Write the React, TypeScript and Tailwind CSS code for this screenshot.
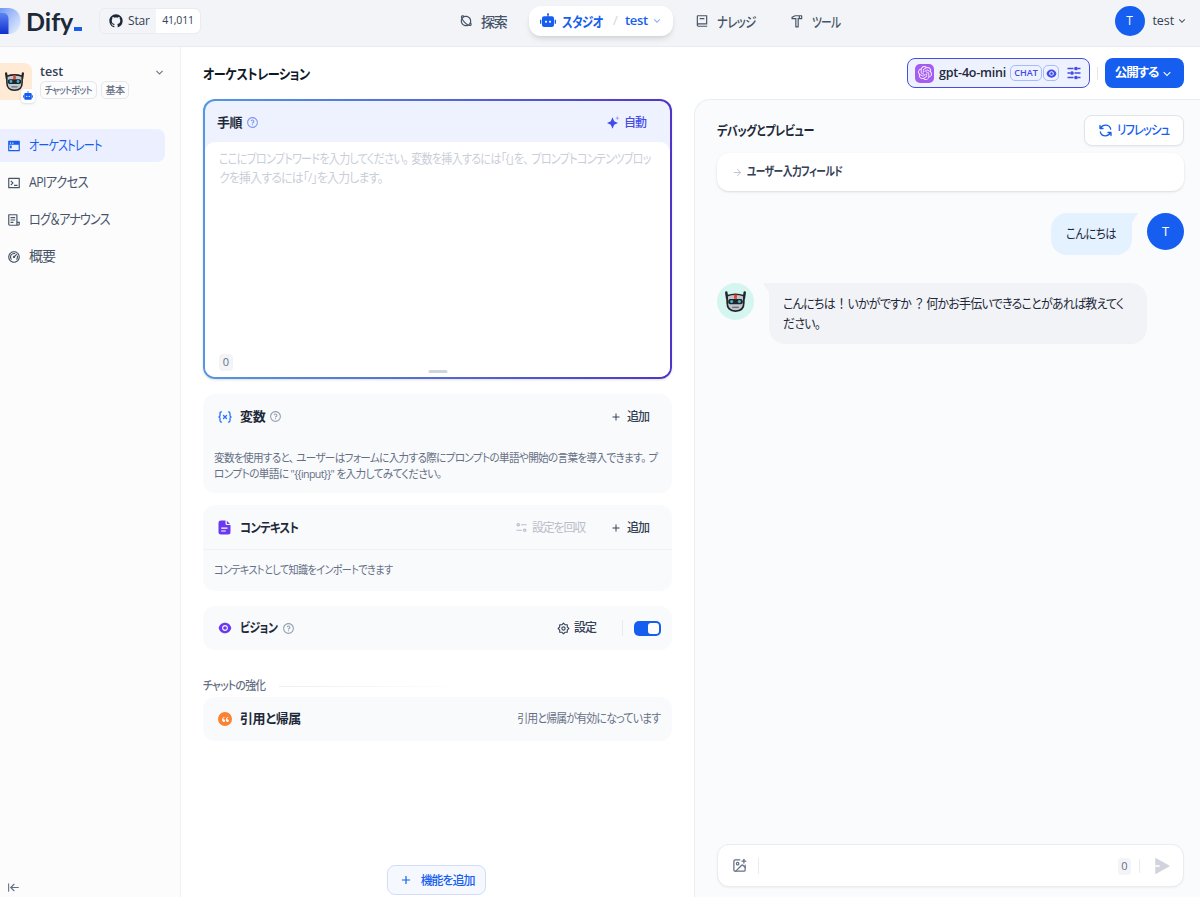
import React from 'react';
import { ArrowLeftToLine, ImagePlus } from 'lucide-react';
import { SiOpenai } from 'react-icons/si';
import {
  RiAddLine,
  RiArrowDownSLine,
  RiArrowRightLine,
  RiBook2Line,
  RiDashboard2Line,
  RiDoubleQuotesL,
  RiEyeFill,
  RiFileList3Line,
  RiGithubFill,
  RiHammerLine,
  RiPlanetLine,
  RiQuestionLine,
  RiRobot2Fill,
  RiSendPlane2Fill,
  RiSettings2Line,
  RiTerminalBoxLine,
  RiTerminalWindowFill,
} from 'react-icons/ri';

const RobotFace: React.FC<{ className?: string }> = ({ className }) => (
  <svg viewBox="0 0 22 22" className={className}>
    <path d="M2.200 2.500 3 8M19.800 2.500 19 8" stroke="#20242b" strokeWidth="2.400" strokeLinecap="round" />
    <path d="M3 5.500Q11 2.600 19 5.500V12q0 8.200-8 8.200T3 12Z" fill="#c3c7cc" stroke="#20242b" strokeWidth="1.600" />
    <path d="M9.600 4.400h2.800v4H9.600z" fill="#e2452f" />
    <rect x="4" y="8.600" width="14" height="5" rx="2" fill="#20242b" />
    <circle cx="7.300" cy="11" r="1.500" fill="#3fb7c9" />
    <circle cx="14.700" cy="11" r="1.500" fill="#3fb7c9" />
    <path d="M7.800 16.600h6.400" stroke="#6b7280" strokeWidth="1.400" />
  </svg>
);

const LogoMark = () => (
  <svg width="21" height="27" viewBox="0 0 21 27">
    <defs>
      <linearGradient id="logo-light" x1="0" y1="0" x2="1" y2="1">
        <stop offset="0" stopColor="#6f98f5" />
        <stop offset="1" stopColor="#eef4ff" />
      </linearGradient>
      <linearGradient id="logo-dark" x1="0" y1="0" x2="0" y2="1">
        <stop offset="0" stopColor="#5d83f2" />
        <stop offset="1" stopColor="#0f2fce" />
      </linearGradient>
    </defs>
    <path d="M0 0h8c8 0 12.500 5.500 12.500 13S16 26 9 26H0Z" fill="url(#logo-light)" />
    <path d="M0 5h4q4.500 1 4.500 6v15H0Z" fill="url(#logo-dark)" />
  </svg>
);

const VariableIcon = () => (
  <svg width="14" height="14" viewBox="0 0 14 14" fill="none" stroke="#2970ff" strokeWidth="1.300" strokeLinecap="round">
    <path d="M3.500 1.800C2.300 1.800 2 2.400 2 3.500v2q0 1.100-1 1.500 1 .4 1 1.500v2c0 1.100.3 1.700 1.500 1.700M10.500 1.800c1.200 0 1.500.6 1.500 1.700v2q0 1.100 1 1.500-1 .4-1 1.500v2c0 1.100-.3 1.700-1.500 1.700M5.500 5.500l3 3M8.500 5.500l-3 3" />
  </svg>
);

const ContextIcon = () => (
  <svg width="13" height="15" viewBox="0 0 13 15">
    <path d="M3 .5h4.500v3q0 1.500 1.500 1.500h3.500v7q0 2.500-2.500 2.500H3Q.5 14.500.5 12V3Q.5.5 3 .5Z" fill="#6938ef" />
    <path d="M8.800.8 12 4H9.500q-.7 0-.7-.7Z" fill="#6938ef" />
    <path d="M3.200 8.200h6.300M3.200 11h4.600" stroke="#fff" strokeWidth="1.200" />
  </svg>
);

const SlidersIcon = () => (
  <svg width="14" height="14" viewBox="0 0 14 14" stroke="#444ce7" strokeWidth="1.300" fill="#444ce7">
    <path d="M.5 2.500h6M11 2.500h2.500M.5 7h2.500M7.500 7h6M.5 11.500h6M11 11.500h2.500" />
    <circle cx="9" cy="2.500" r="1.200" />
    <circle cx="5" cy="7" r="1.200" />
    <circle cx="9" cy="11.500" r="1.200" />
  </svg>
);

const SparkleIcon = () => (
  <svg width="13" height="13" viewBox="0 0 13 13" fill="#444ce7">
    <path d="M5.500 1.300 7.200 5.300 11 7 7.200 8.700 5.500 12.700 3.800 8.700 0 7l3.800-1.700Z" />
    <path d="m10.300 0 .6 1.600 1.600.6-1.600.6-.6 1.600-.6-1.600-1.600-.6 1.600-.6Z" opacity=".5" />
  </svg>
);

const RecallIcon = () => (
  <svg width="11" height="11" viewBox="0 0 12 12" fill="none" stroke="#b9bec8" strokeWidth="1.300">
    <circle cx="2.500" cy="3" r="1.300" />
    <path d="M5.500 3h6M.5 9h6" />
    <circle cx="9.500" cy="9" r="1.300" />
  </svg>
);

const RefreshIcon = () => (
  <svg width="13" height="13" viewBox="0 0 13 13" fill="none" stroke="#155eef" strokeWidth="1.300" strokeLinecap="round" strokeLinejoin="round">
    <path d="M1 1.500v3h3M1.300 4.300C2.500 2.300 4.300 1.200 6.500 1.200c2.600 0 4.700 1.700 5.200 4M12 11.500v-3H9M11.700 8.700c-1.200 2-3 3.100-5.200 3.100-2.600 0-4.700-1.700-5.200-4" />
  </svg>
);

const navItems = [
  { icon: RiTerminalWindowFill, label: 'オーケストレート', fit: 'tracking-[-1px] scale-x-[0.79]', active: true },
  { icon: RiTerminalBoxLine, label: 'APIアクセス', fit: 'tracking-[-0.7px] scale-x-[0.88]', active: false },
  { icon: RiFileList3Line, label: 'ログ＆アナウンス', fit: 'tracking-[-1px] scale-x-[0.865]', active: false },
  { icon: RiDashboard2Line, label: '概要', fit: 'tracking-[-1px]', active: false },
];

const Header = () => (
  <header className="flex h-[47px] shrink-0 items-center border-b border-[#e9ebf0] bg-[#f2f4f7] pb-[4px]">
    <div className="flex w-[99px] items-center">
      <LogoMark />
      <div className="ml-[5px] flex items-end">
        <span className="w-[48px] font-['Lato'] text-[25px] leading-[28px] font-bold text-[#1d2939]">Dify</span>
        <span className="mb-[4px] h-[4px] w-[8px] bg-[#155eef]"></span>
      </div>
    </div>
    <div className="flex h-[26px] w-[102px] items-center rounded-md border border-[#eaecf0] text-[12px] font-medium text-[#344054]">
      <div className="flex w-[56px] items-center gap-1 pl-2">
        <RiGithubFill size={16} className="text-[#1d2939]" />
        <span className="tracking-[-0.2px]">Star</span>
      </div>
      <div className="flex h-full flex-1 items-center justify-center rounded-r-md bg-white text-[10.500px] tracking-[-0.2px]">41,011</div>
    </div>

    <nav className="ml-[258px] flex items-center text-[14px] font-medium text-[#475467]">
      <div className="flex w-[70px] items-center gap-[8px]">
        <RiPlanetLine size={14} />
        <span className="tracking-[-1.200px]">探索</span>
      </div>
      <div className="flex h-[30px] w-[144px] items-center rounded-xl bg-white pl-[11px] text-[#155eef] shadow-md">
        <RiRobot2Fill size={16} />
        <span className="ml-[6px] w-[51px] origin-left scale-x-[0.81] font-semibold whitespace-nowrap tracking-[-0.6px]">スタジオ</span>
        <span className="w-[12px] text-[13px] font-normal text-[#d0d5dd]">/</span>
        <span className="text-[13px] font-semibold tracking-[-0.3px]">test</span>
        <RiArrowDownSLine size={12} className="ml-[3px] text-[#84adff]" />
      </div>
      <div className="ml-[22px] flex w-[95px] items-center gap-[8px]">
        <RiBook2Line size={14} />
        <span className="origin-left scale-x-[0.81] tracking-[-0.6px]">ナレッジ</span>
      </div>
      <div className="flex items-center gap-[8px]">
        <RiHammerLine size={14} />
        <span className="w-[32px] origin-left scale-x-[0.77] whitespace-nowrap tracking-[-1px]">ツール</span>
      </div>
    </nav>

    <div className="mr-[12px] ml-auto flex items-center">
      <div className="flex size-[30px] items-center justify-center rounded-full bg-[#155eef] text-[12px] text-white">T</div>
      <span className="ml-[8px] text-[12.500px] tracking-[-0.1px] text-[#344054]">test</span>
      <RiArrowDownSLine size={12} className="ml-[2px] text-[#475467]" />
    </div>
  </header>
);

const Sidebar = () => (
  <aside className="flex w-[181px] shrink-0 flex-col border-r border-[#f0f1f4] bg-[#fcfcfd]">
    <div className="flex h-[82px] pt-[16px]">
      <div className="relative flex h-[37px] w-[32px] items-center rounded-r-lg bg-[#ffead5]">
        <RobotFace className="ml-[4px] size-[21px]" />
        <div className="absolute -right-[3px] -bottom-[3px] flex size-[14px] items-center justify-center rounded bg-white text-[#155eef] shadow-sm">
          <RiRobot2Fill size={10} />
        </div>
      </div>
      <div className="ml-[8px] flex-1">
        <div className="flex h-[18px] items-center justify-between pr-[14px]">
          <span className="text-[12.500px] font-semibold text-[#344054]">test</span>
          <RiArrowDownSLine size={13} className="text-[#667085]" />
        </div>
        <div className="flex gap-[4px] text-[10px] font-medium text-[#667085]">
          <span className="flex h-[18px] w-[57px] items-center justify-center rounded-[5px] border border-[#e4e7ec]">
            <span className="scale-x-[0.9] whitespace-nowrap tracking-[-0.8px]">チャットボット</span>
          </span>
          <span className="flex h-[18px] w-[28px] items-center justify-center rounded-[5px] border border-[#e4e7ec] tracking-[-0.5px]">基本</span>
        </div>
      </div>
    </div>
    <nav className="flex flex-col gap-[4px] text-[14px] text-[#475467]">
      {navItems.map(({ icon: Icon, label, fit, active }) => (
        <div
          key={label}
          className={`flex h-[33px] w-[165px] items-center gap-[8px] rounded-r-lg pl-[7px] ${active ? 'bg-[#ebefff] text-[#155eef]' : ''}`}
        >
          <Icon size={14} />
          <span className={`origin-left pb-[2px] whitespace-nowrap ${fit}`}>{label}</span>
        </div>
      ))}
    </nav>
    <ArrowLeftToLine size={13} strokeWidth={2} className="mt-auto mb-[3px] ml-[7px] text-[#667085]" />
  </aside>
);

const AddButton = () => (
  <div className="flex items-center gap-[5px] text-[12px] font-medium text-[#344054]">
    <RiAddLine size={12} />
    <span className="tracking-[-1px]">追加</span>
  </div>
);

const Config = () => (
  <section className="flex w-[513px] shrink-0 flex-col pl-[22px]">
    <div className="w-[469px]">
      <div className="h-[280px] rounded-xl bg-linear-to-r from-[#5497e2] to-[#4f34c8] p-[2px] shadow-sm">
        <div className="flex h-full flex-col rounded-[10px] bg-[#eef2ff]">
          <div className="flex h-[41px] items-center pt-[2px] pr-[24px] pl-[12px]">
            <span className="text-[13px] font-semibold tracking-[-0.6px] text-[#1d2939]">手順</span>
            <RiQuestionLine size={13} className="ml-[4px] text-[#8098f9]" />
            <div className="ml-auto flex items-center gap-[4px] text-[12px] font-medium text-[#444ce7]">
              <SparkleIcon />
              <span className="tracking-[-1px]">自動</span>
            </div>
          </div>
          <div className="relative flex flex-1 flex-col rounded-[10px] bg-white px-[14px] pt-[7px]">
            <div className="text-[13px] leading-[19px] whitespace-nowrap text-[#c9ced8]">
              <div className="w-[430px] origin-left scale-x-[0.846] tracking-[-0.8px]">
                ここにプロンプトワードを入力してください。<span className="ml-[4px]">変数を挿入するには「{'{'}」を、</span><span className="ml-[4px]">プロンプトコンテンツブロッ</span>
              </div>
              <div className="w-[430px] origin-left scale-x-[0.91] tracking-[-0.8px]">クを挿入するには「/」を入力します。</div>
            </div>
            <div className="mt-auto mb-[6px] flex h-[17px] w-[14px] items-center justify-center rounded bg-[#f2f4f7] text-[11px] text-[#667085]">0</div>
            <div className="absolute bottom-[4px] left-1/2 h-[3px] w-[19px] -translate-x-1/2 rounded-full bg-[#d0d5dd]"></div>
          </div>
        </div>
      </div>

      <div className="mt-[15px] h-[99px] rounded-xl bg-[#f9fafc]">
        <div className="flex h-[44px] items-center pt-[1px] pr-[23px] pl-[15px]">
          <VariableIcon />
          <span className="ml-[8px] text-[13px] font-semibold tracking-[-0.3px] text-[#1d2939]">変数</span>
          <RiQuestionLine size={13} className="mr-auto ml-[4px] text-[#98a2b3]" />
          <AddButton />
        </div>
        <div className="mt-[12px] pl-[11px] text-[11.500px] leading-[15.500px] whitespace-nowrap text-[#667085]">
          <div className="w-[440px] origin-left scale-x-[0.919] tracking-[-0.7px]">
            変数を使用すると、<span className="ml-[3px]">ユーザーはフォームに入力する際にプロンプトの単語や開始の言葉を導入できます。</span><span className="ml-[3px]">プ</span>
          </div>
          <div className="w-[440px] origin-left scale-x-[0.93] tracking-[-0.7px]">ロンプトの単語に "{'{{input}}'}" を入力してみてください。</div>
        </div>
      </div>

      <div className="mt-[12px] h-[86px] rounded-xl bg-[#f9fafc]">
        <div className="flex h-[45px] items-center border-b border-[#f0f2f5] pt-[1px] pr-[23px] pl-[15px]">
          <ContextIcon />
          <span className="ml-[9px] origin-left scale-x-[0.87] text-[13px] font-semibold tracking-[-0.7px] text-[#1d2939]">コンテキスト</span>
          <div className="mr-[25px] ml-auto flex items-center gap-[5px] text-[12px] text-[#b9bec8]">
            <RecallIcon />
            <span className="tracking-[-1.200px]">設定を回収</span>
          </div>
          <AddButton />
        </div>
        <div className="w-[440px] origin-left pt-[12px] pl-[11px] text-[11.500px] leading-[16px] whitespace-nowrap text-[#667085]">
          <div className="origin-left scale-x-[0.877] tracking-[-0.7px]">コンテキストとして知識をインポートできます</div>
        </div>
      </div>

      <div className="mt-[15px] flex h-[44px] items-center rounded-xl bg-[#f9fafc] pr-[11px] pl-[15px]">
        <RiEyeFill size={14} className="text-[#6938ef]" />
        <span className="ml-[8px] w-[39px] origin-left scale-x-[0.84] text-[13px] font-semibold whitespace-nowrap tracking-[-0.6px] text-[#1d2939]">ビジョン</span>
        <RiQuestionLine size={13} className="ml-[3px] text-[#98a2b3]" />
        <div className="ml-auto flex items-center gap-[4px] text-[12px] font-medium text-[#344054]">
          <RiSettings2Line size={13} />
          <span className="tracking-[-1px]">設定</span>
        </div>
        <div className="mr-[11px] ml-[26px] h-[16px] w-px bg-[#eaecf0]"></div>
        <div className="flex h-[15px] w-[27px] justify-end rounded-[5px] bg-[#155eef] p-[2px]">
          <div className="w-[11px] rounded-[3px] bg-white"></div>
        </div>
      </div>

      <div className="mt-[28px] flex h-[16px] items-center">
        <span className="w-[76px] origin-left scale-x-[0.9] text-[12px] font-medium whitespace-nowrap tracking-[-0.8px] text-[#667085]">チャットの強化</span>
        <div className="h-px w-[190px] bg-linear-to-r from-[#eceef2] to-white"></div>
      </div>
      <div className="mt-[3px] flex h-[44px] items-center rounded-xl bg-[#f9fafc] pr-[12px] pl-[15px]">
        <div className="flex size-[14px] items-center justify-center rounded-full bg-[#fb8232]">
          <RiDoubleQuotesL size={9} className="text-white" />
        </div>
        <span className="ml-[8px] text-[13px] font-semibold tracking-[-0.4px] text-[#1d2939]">引用と帰属</span>
        <span className="ml-auto origin-right scale-x-[0.91] text-[12px] tracking-[-0.9px] text-[#667085]">引用と帰属が有効になっています</span>
      </div>
    </div>
    <div className="mt-auto mb-[2px] ml-[184px] flex h-[30px] w-[99px] items-center justify-center gap-[8px] rounded-lg border border-[#d1dcfb] bg-[#f5f8ff] text-[12px] font-medium text-[#155eef]">
      <RiAddLine size={14} />
      <span className="pt-[1px] tracking-[-1.100px]">機能を追加</span>
    </div>
  </section>
);

const Preview = () => (
  <section className="flex flex-1 flex-col rounded-tl-2xl border-t border-l border-[#eaedf1] bg-[#f9fbfc] pr-[16px] pl-[22px]">
    <div className="flex h-[53px] items-center justify-between pt-[7px]">
      <span className="origin-left scale-x-[0.85] pt-[2px] text-[13px] font-semibold tracking-[-0.5px] text-[#1d2939]">デバッグとプレビュー</span>
      <div className="flex h-[31px] w-[100px] items-center rounded-lg border border-[#e1e4ea] bg-white pl-[14px] text-[13px] font-medium text-[#155eef] shadow-xs">
        <RefreshIcon />
        <span className="ml-[5px] w-[54px] origin-left scale-x-[0.87] whitespace-nowrap tracking-[-1px]">リフレッシュ</span>
      </div>
    </div>
    <div className="flex h-[38px] items-center rounded-xl bg-white pl-[15px] shadow">
      <RiArrowRightLine size={11} className="text-[#c3c8d2]" />
      <span className="ml-[4px] origin-left scale-x-[0.81] text-[12px] font-semibold tracking-[-0.6px] text-[#344054]">ユーザー入力フィールド</span>
    </div>

    <div className="mt-[22px] flex h-[42px] justify-end">
      <div className="relative mr-[15px] flex w-[81px] items-center rounded-2xl rounded-tr-none bg-[#e4f1ff] pl-[15px] text-[13px] text-[#1d2939]">
        <span className="origin-left scale-x-[0.87] whitespace-nowrap tracking-[-0.6px]">こんにちは</span>
        <svg width="7" height="12" viewBox="0 0 7 12" className="absolute top-0 -right-[6px] text-[#e4f1ff]">
          <path d="M0 0h6q1 0 .5 1L0 11Z" fill="currentColor" />
        </svg>
      </div>
      <div className="flex size-[37px] items-center justify-center rounded-full bg-[#155eef] text-[13px] text-white">T</div>
    </div>

    <div className="mt-[28px] flex">
      <div className="flex size-[37px] items-center justify-center rounded-full bg-[#d5f5f1]">
        <RobotFace className="size-[23px]" />
      </div>
      <div className="relative ml-[15px] h-[61px] w-[378px] rounded-2xl rounded-tl-none bg-[#f2f3f6] pt-[10px] pl-[14px] text-[13px] leading-[20px] whitespace-nowrap text-[#1d2939]">
        <svg width="7" height="12" viewBox="0 0 7 12" className="absolute top-0 -left-[6px] text-[#f2f3f6]">
          <path d="M7 0H1Q0 0 .5 1L7 11Z" fill="currentColor" />
        </svg>
        <div className="w-[350px] origin-left scale-x-[0.92] tracking-[-0.8px]">
          こんにちは<span className="mx-[4px]">！</span>いかがですか<span className="mx-[4px]">？</span>何かお手伝いできることがあれば教えてく
        </div>
        <div className="w-[350px] origin-left scale-x-[0.92] tracking-[-0.8px]">ださい。</div>
      </div>
    </div>

    <div className="mt-auto mb-[10px] flex h-[43px] items-center rounded-xl border border-[#e9ecf0] bg-white pr-[12px] pl-[14px] shadow-xs">
      <ImagePlus size={15} className="text-[#667085]" />
      <div className="ml-[11px] h-[16px] w-px bg-[#eaecf0]"></div>
      <div className="mt-[2px] ml-auto flex h-[17px] w-[13px] items-center justify-center rounded bg-[#f2f4f7] text-[11px] font-medium text-[#667085]">0</div>
      <div className="ml-[8px] h-[14px] w-px bg-[#eaecf0]"></div>
      <RiSendPlane2Fill size={18} className="ml-[13px] text-[#d0d5dd]" />
    </div>
  </section>
);

export default function App() {
  return (
    <div className="flex h-[897px] w-[1200px] flex-col overflow-hidden bg-white font-['Open_Sans','Noto_Sans_CJK_JP',sans-serif] [font-feature-settings:'palt']">
      <Header />
      <div className="flex min-h-0 flex-1">
        <Sidebar />
        <main className="flex flex-1 flex-col">
          <div className="flex h-[52px] shrink-0 items-center pr-[16px] pl-[22px]">
            <span className="w-[200px] origin-left scale-x-[0.865] text-[14px] font-semibold tracking-[-0.5px] text-[#101828]">オーケストレーション</span>
            <div className="ml-auto flex h-[30px] w-[183px] items-center rounded-lg border-[1.500px] border-[#444ce7] bg-[#eef2ff] pl-[7px]">
              <div className="flex size-[19px] items-center justify-center rounded-[5px] bg-[#a55cf0]">
                <SiOpenai size={14} className="text-[#f4ebff]" />
              </div>
              <span className="ml-[5px] w-[67px] text-[12.500px] font-semibold tracking-[-0.2px] whitespace-nowrap text-[#1d2939]">gpt-4o-mini</span>
              <span className="ml-[4px] flex h-[16px] w-[32px] items-center justify-center rounded-[5px] border border-[#a4bcfd] text-[9px] font-semibold text-[#444ce7]">CHAT</span>
              <span className="ml-[1px] flex h-[16px] w-[16px] items-center justify-center rounded-[5px] border border-[#a4bcfd]">
                <RiEyeFill size={11} className="text-[#444ce7]" />
              </span>
              <span className="ml-[8px]"><SlidersIcon /></span>
            </div>
            <div className="mx-[7px] h-[13px] w-px bg-[#e4e7ec]"></div>
            <div className="flex h-[30px] w-[79px] items-center justify-center gap-[2px] rounded-lg bg-[#155eef] pt-[1px] text-[12.500px] font-semibold text-white">
              <span className="tracking-[-1.100px]">公開する</span>
              <RiArrowDownSLine size={14} />
            </div>
          </div>
          <div className="flex min-h-0 flex-1">
            <Config />
            <Preview />
          </div>
        </main>
      </div>
    </div>
  );
}
